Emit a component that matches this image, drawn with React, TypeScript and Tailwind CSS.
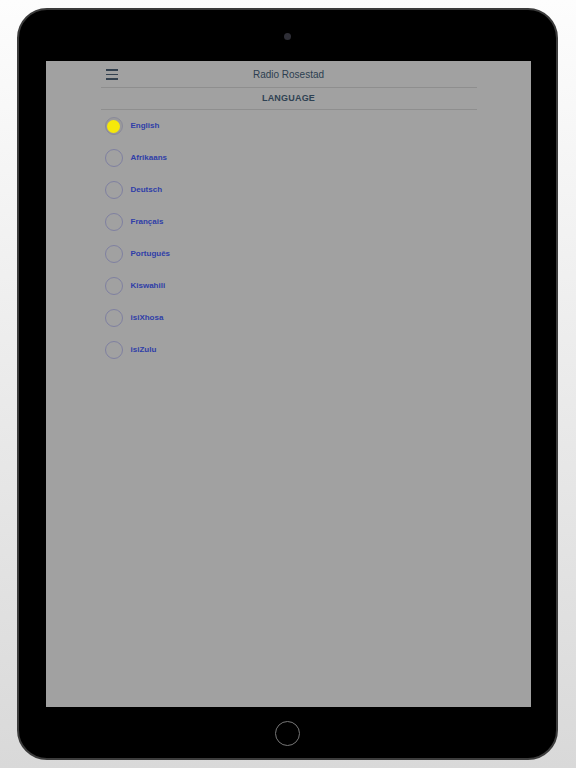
import React from "react";

const languages = [
  "English",
  "Afrikaans",
  "Deutsch",
  "Français",
  "Português",
  "Kiswahili",
  "isiXhosa",
  "isiZulu",
];

export default function App() {
  const selected = "English";

  return (
    <div
      className="h-[768px] w-[576px] overflow-hidden bg-gradient-to-b from-[#fdfdfd] to-[#d9d9d9] px-[17px] pt-[8px]"
      style={{ fontFamily: '"Liberation Sans", Arial, sans-serif' }}
    >
      <div className="flex h-[752px] w-[541px] flex-col rounded-[30px] border-2 border-[#3c3c3c] bg-black">
        {/* camera */}
        <div className="flex h-[51px] items-center justify-center pt-[1px]">
          <div className="h-[7px] w-[7px] rounded-full bg-[#2e2e36]" />
        </div>

        {/* screen */}
        <div className="ml-[27px] flex h-[646px] w-[485px] flex-col items-center bg-[#a1a1a1]">
          <div className="w-[376px]">
            <div className="relative flex h-[27px] items-center justify-center border-b border-[#8e8e8e]">
              <div className="absolute left-[5px] top-[8px] flex w-[12px] flex-col gap-[3px]">
                <span className="h-[1.5px] bg-[#33414f]" />
                <span className="h-[1.5px] bg-[#33414f]" />
                <span className="h-[1.5px] bg-[#33414f]" />
              </div>
              <span className="text-[10px] text-[#2c3e50]">Radio Rosestad</span>
            </div>
            <div className="flex h-[22px] items-center justify-center border-b border-[#8e8e8e]">
              <span className="text-[9px] font-bold tracking-[0.2px] text-[#2f4253]">
                LANGUAGE
              </span>
            </div>
            <div className="flex flex-col">
              {languages.map((lang) => (
                <div key={lang} className="flex h-8 items-center gap-[8px] pl-[4px]">
                  {lang === selected ? (
                    <span className="flex h-[18px] w-[18px] items-center justify-center rounded-full border border-[#8a8a9a] bg-[#9a9a9a]">
                      <span className="h-[13px] w-[13px] rounded-full bg-[#f6e80a]" />
                    </span>
                  ) : (
                    <span className="h-[18px] w-[18px] rounded-full border border-[#7f80a0]" />
                  )}
                  <span className="text-[8px] font-bold text-[#2f3ea8]">{lang}</span>
                </div>
              ))}
            </div>
          </div>
        </div>

        {/* home button */}
        <div className="flex flex-1 items-center justify-center pt-[2px]">
          <div className="h-[25px] w-[25px] rounded-full border-[1.5px] border-[#777777]" />
        </div>
      </div>
    </div>
  );
}
